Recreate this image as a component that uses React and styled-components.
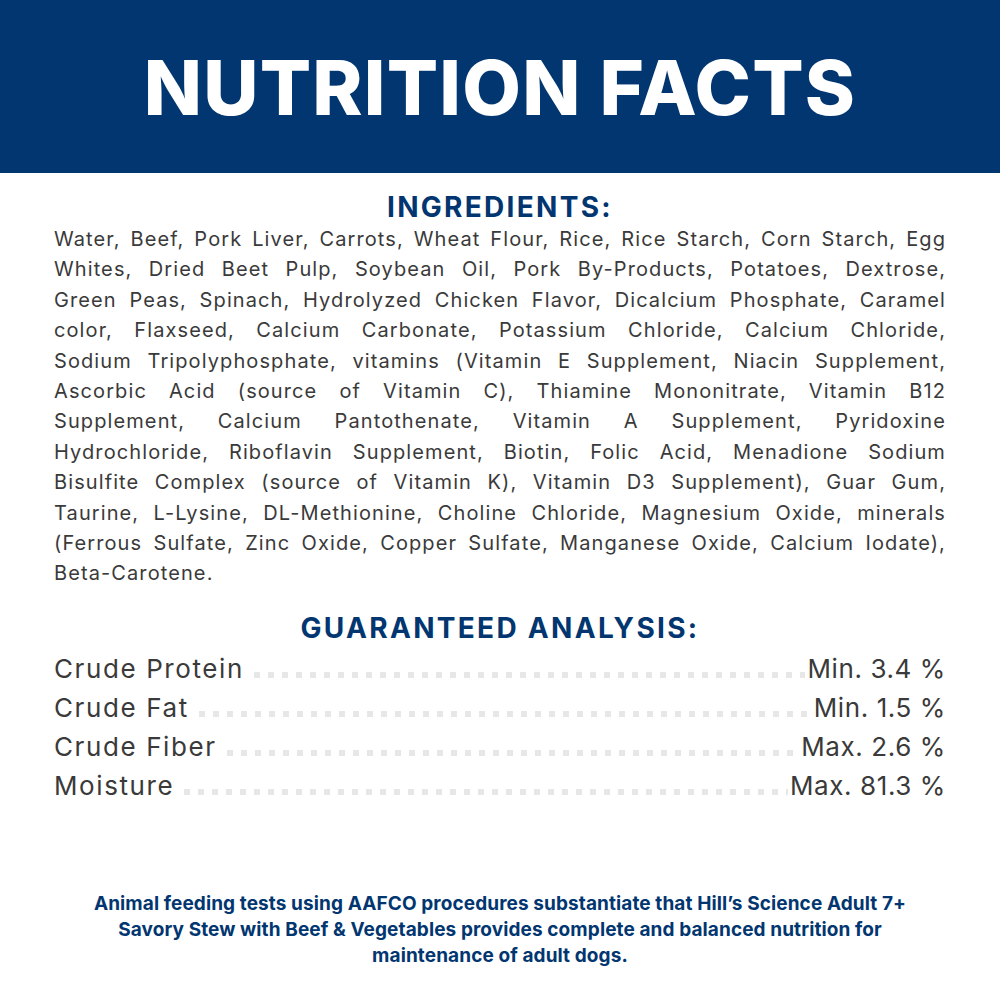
import React from 'react'
import styled, { createGlobalStyle } from 'styled-components'

const Global = createGlobalStyle`
  html, body { margin: 0; padding: 0; background: #fff; }
  body { font-family: Inter, "Open Sans", sans-serif; }
`

const NAVY = '#023670'

const Page = styled.div`
  width: 1000px;
  height: 1000px;
  display: flex;
  flex-direction: column;
  overflow: hidden;
`

const Banner = styled.header`
  height: 173px;
  background: ${NAVY};
  display: flex;
  align-items: center;
  justify-content: center;
`

const Title = styled.h1`
  margin: 0;
  color: #fff;
  font-family: Inter, sans-serif;
  font-weight: 800;
  font-size: 76px;
  letter-spacing: 1.2px;
  line-height: 1;
`

const Body = styled.main`
  padding: 0 54px 0 54px;
  display: flex;
  flex-direction: column;
`

const Heading = styled.h2`
  margin: ${p => p.$top}px 0 0;
  text-align: center;
  color: ${NAVY};
  font-family: Inter, sans-serif;
  font-weight: 700;
  font-size: 28px;
  line-height: 34px;
  letter-spacing: 2.3px;
`

const Ingredients = styled.div`
  color: #3a3a3a;
  font-size: 20px;
  font-weight: 400;
  line-height: 30.4px;
  letter-spacing: 1.1px;
`

const Line = styled.div`
  text-align: justify;
  text-align-last: ${p => (p.$last ? 'left' : 'justify')};
  white-space: nowrap;
`

const Table = styled.div`
  margin-top: 4px;
  display: flex;
  flex-direction: column;
`

const Row = styled.div`
  display: flex;
  align-items: flex-end;
  height: 39px;
  color: #3a3a3a;
  font-size: 26px;
  font-weight: 400;
  letter-spacing: 1.6px;
`

const Label = styled.span`
  line-height: 39px;
`

const Dots = styled.span`
  flex: 1;
  height: 6px;
  margin: 0 2px 10px 10px;
  background-image: linear-gradient(to right, #e7e7e7 6px, transparent 6px);
  background-size: 14px 6px;
  background-repeat: repeat-x;
`

const Value = styled.span`
  line-height: 39px;
  text-align: right;
  letter-spacing: 0.6px;
`

const Note = styled.p`
  margin: ${p => p.$top}px 0 0;
  text-align: center;
  color: ${NAVY};
  font-size: 19px;
  font-weight: 700;
  line-height: 26px;
  letter-spacing: 0.1px;
`

const lines = [
  'Water, Beef, Pork Liver, Carrots, Wheat Flour, Rice, Rice Starch, Corn Starch, Egg',
  'Whites, Dried Beet Pulp, Soybean Oil, Pork By-Products, Potatoes, Dextrose,',
  'Green Peas, Spinach, Hydrolyzed Chicken Flavor, Dicalcium Phosphate, Caramel',
  'color, Flaxseed, Calcium Carbonate, Potassium Chloride, Calcium Chloride,',
  'Sodium Tripolyphosphate, vitamins (Vitamin E Supplement, Niacin Supplement,',
  'Ascorbic Acid (source of Vitamin C), Thiamine Mononitrate, Vitamin B12',
  'Supplement, Calcium Pantothenate, Vitamin A Supplement, Pyridoxine',
  'Hydrochloride, Riboflavin Supplement, Biotin, Folic Acid, Menadione Sodium',
  'Bisulfite Complex (source of Vitamin K), Vitamin D3 Supplement), Guar Gum,',
  'Taurine, L-Lysine, DL-Methionine, Choline Chloride, Magnesium Oxide, minerals',
  '(Ferrous Sulfate, Zinc Oxide, Copper Sulfate, Manganese Oxide, Calcium Iodate),',
  'Beta-Carotene.',
]

const analysis = [
  ['Crude Protein', 'Min. 3.4 %'],
  ['Crude Fat', 'Min. 1.5 %'],
  ['Crude Fiber', 'Max. 2.6 %'],
  ['Moisture', 'Max. 81.3 %'],
]

export default function App() {
  return (
    <Page>
      <Global />
      <Banner>
        <Title>NUTRITION FACTS</Title>
      </Banner>
      <Body>
        <Heading $top={17}>INGREDIENTS:</Heading>
        <Ingredients>
          {lines.map((l, i) => (
            <Line key={i} $last={i === lines.length - 1}>{l}</Line>
          ))}
        </Ingredients>
        <Heading $top={22}>GUARANTEED ANALYSIS:</Heading>
        <Table>
          {analysis.map(([k, v]) => (
            <Row key={k}>
              <Label>{k}</Label>
              <Dots />
              <Value>{v}</Value>
            </Row>
          ))}
        </Table>
        <Note $top={86}>
          Animal feeding tests using AAFCO procedures substantiate that Hill’s Science Adult 7+
          <br />
          Savory Stew with Beef &amp; Vegetables provides complete and balanced nutrition for
          <br />
          maintenance of adult dogs.
        </Note>
      </Body>
    </Page>
  )
}
